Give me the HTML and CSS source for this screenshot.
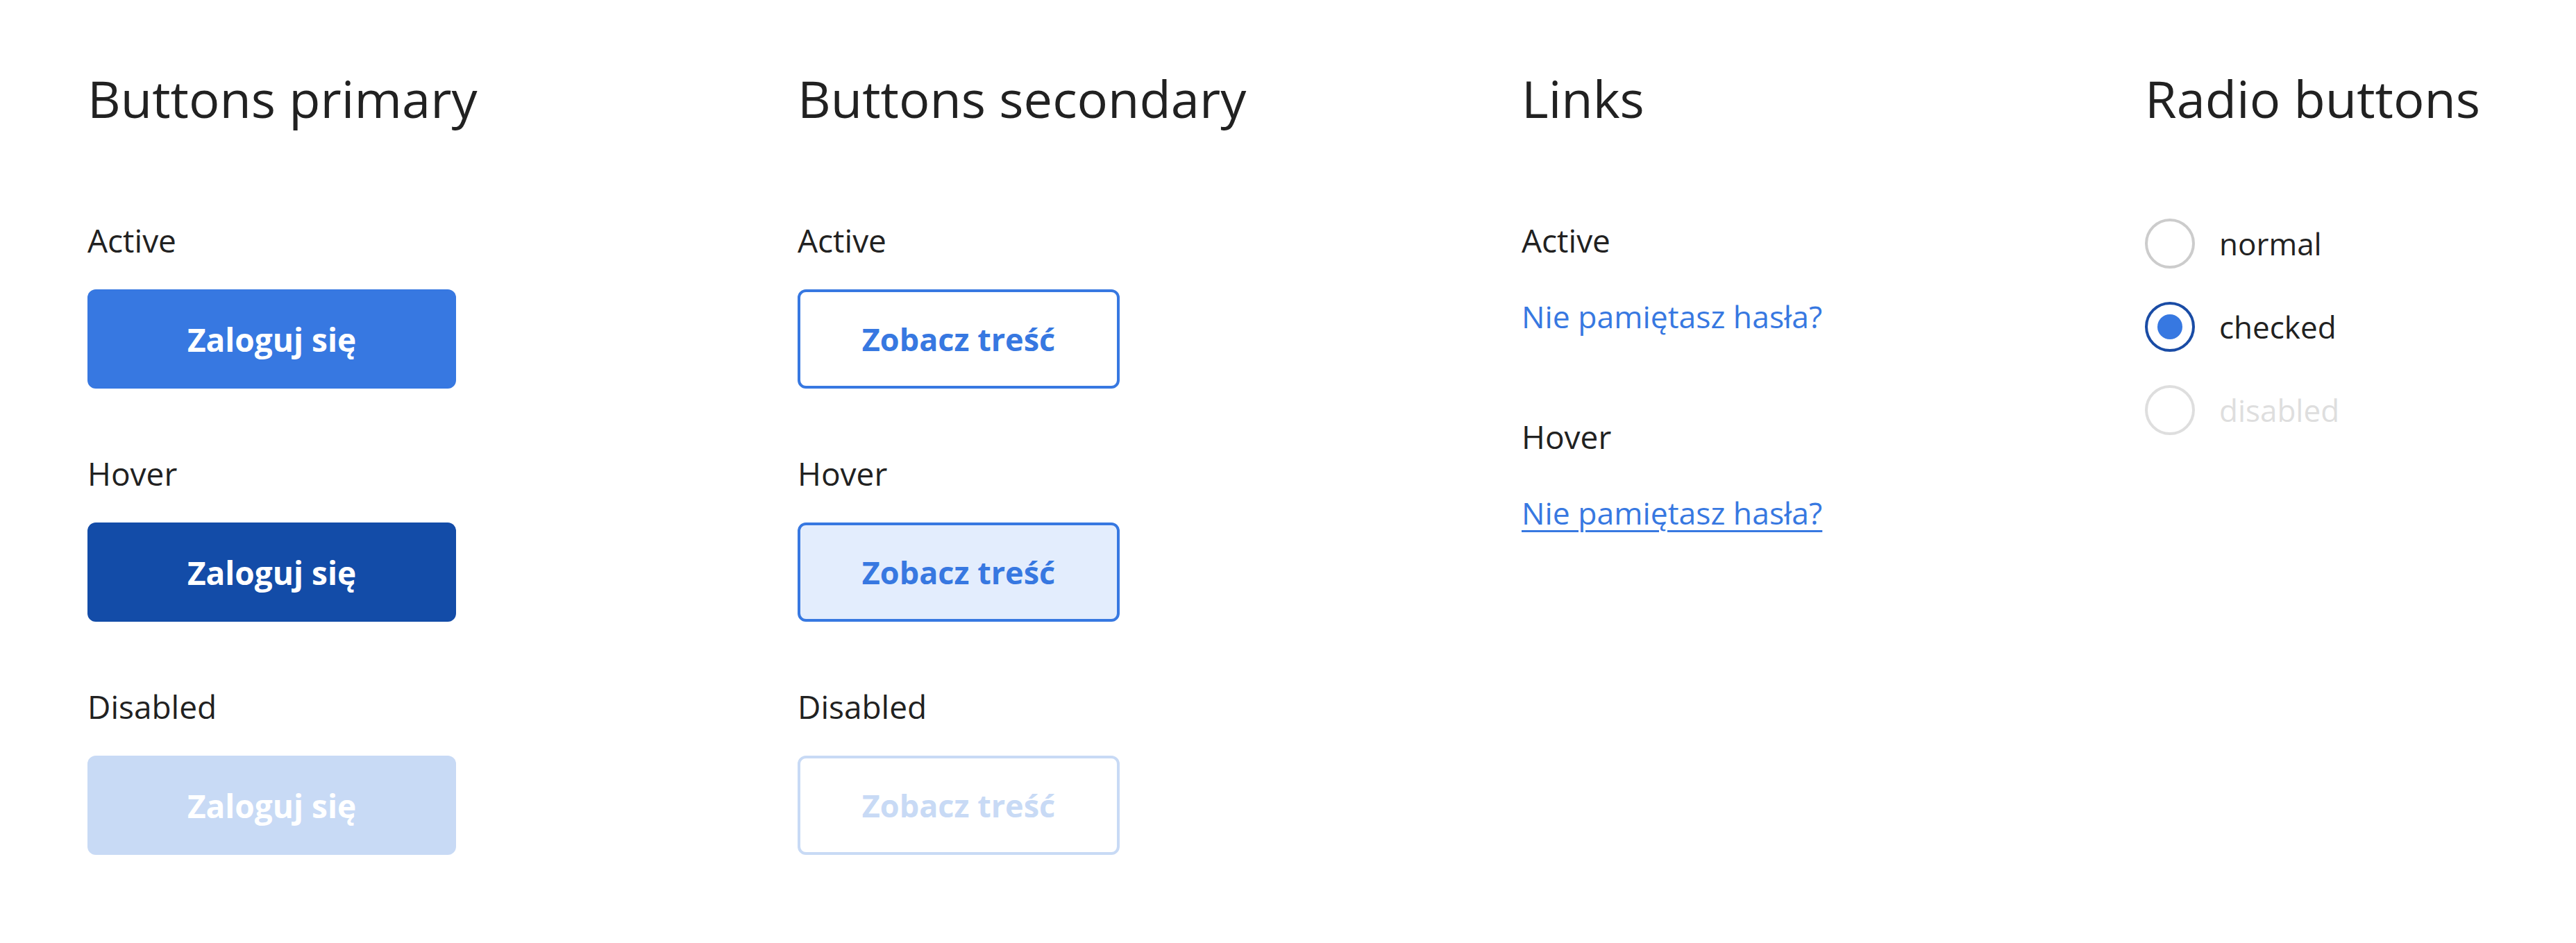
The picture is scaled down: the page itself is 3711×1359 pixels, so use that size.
FILE: index.html
```html
<!DOCTYPE html>
<html lang="pl">
<head>
<meta charset="utf-8">
<title>UI components</title>
<link rel="stylesheet" href="styles.css">
</head>
<body>
<main class="page">
  <section class="col">
    <h2 class="title">Buttons primary</h2>
    <div class="states">
      <div class="state">
        <p class="label">Active</p>
        <button class="btn btn-primary" type="button">Zaloguj się</button>
      </div>
      <div class="state">
        <p class="label">Hover</p>
        <button class="btn btn-primary is-hover" type="button">Zaloguj się</button>
      </div>
      <div class="state">
        <p class="label">Disabled</p>
        <button class="btn btn-primary" type="button" disabled>Zaloguj się</button>
      </div>
    </div>
  </section>

  <section class="col">
    <h2 class="title">Buttons secondary</h2>
    <div class="states">
      <div class="state">
        <p class="label">Active</p>
        <button class="btn btn-secondary" type="button">Zobacz treść</button>
      </div>
      <div class="state">
        <p class="label">Hover</p>
        <button class="btn btn-secondary is-hover" type="button">Zobacz treść</button>
      </div>
      <div class="state">
        <p class="label">Disabled</p>
        <button class="btn btn-secondary" type="button" disabled>Zobacz treść</button>
      </div>
    </div>
  </section>

  <section class="col">
    <h2 class="title">Links</h2>
    <div class="link-states">
      <div class="link-state">
        <p class="label">Active</p>
        <a class="link" href="#">Nie pamiętasz hasła?</a>
      </div>
      <div class="link-state">
        <p class="label">Hover</p>
        <a class="link is-hover" href="#">Nie pamiętasz hasła?</a>
      </div>
    </div>
  </section>

  <section class="col">
    <h2 class="title">Radio buttons</h2>
    <div class="radios">
      <label class="radio">
        <span class="radio-mark"></span>
        <span class="radio-text">normal</span>
      </label>
      <label class="radio radio-checked">
        <span class="radio-mark"></span>
        <span class="radio-text">checked</span>
      </label>
      <label class="radio radio-disabled">
        <span class="radio-mark"></span>
        <span class="radio-text">disabled</span>
      </label>
    </div>
  </section>
</main>
</body>
</html>
```

FILE: styles.css
```css
html, body {
  margin: 0;
  background: #ffffff;
}

body {
  font-family: "Open Sans", "Noto Sans", sans-serif;
  color: #212121;
}

.page {
  display: grid;
  grid-template-columns: 1023px 1043px 898px auto;
  padding: 97px 0 0 126px;
}

.title {
  margin: 0 0 129px;
  font-size: 74px;
  font-weight: 400;
  line-height: 90px;
}

.states {
  display: flex;
  flex-direction: column;
  gap: 92px;
}

.state {
  display: flex;
  flex-direction: column;
  align-items: flex-start;
  gap: 41px;
}

.label {
  margin: 0;
  font-size: 46px;
  line-height: 60px;
}

.btn {
  box-sizing: border-box;
  height: 143px;
  display: flex;
  align-items: center;
  justify-content: center;
  padding: 0;
  border: 0;
  border-radius: 12px;
  font-family: "Open Sans", "Noto Sans", sans-serif;
  font-size: 46px;
  font-weight: 700;
  line-height: 1;
  cursor: pointer;
}

.btn-primary {
  width: 531px;
  background: #3778e1;
  color: #ffffff;
}

.btn-primary.is-hover {
  background: #134ca8;
}

.btn-primary:disabled {
  background: #c8daf5;
  cursor: default;
}

.btn-secondary {
  width: 464px;
  background: #ffffff;
  border: 4px solid #3778e1;
  color: #3778e1;
  font-size: 45px;
}

.btn-secondary.is-hover {
  background: #e3edfd;
}

.btn-secondary:disabled {
  border-color: #c8daf5;
  color: #c8daf5;
  cursor: default;
}

.link-states {
  display: flex;
  flex-direction: column;
  gap: 113px;
}

.link-state {
  display: flex;
  flex-direction: column;
  align-items: flex-start;
  gap: 50px;
}

.link {
  font-size: 44.5px;
  line-height: 60px;
  color: #3778e1;
  text-decoration: none;
}

.link.is-hover {
  text-decoration: underline;
  text-decoration-thickness: 3px;
  text-underline-offset: 8px;
}

.radios {
  display: flex;
  flex-direction: column;
  gap: 48px;
  margin-top: -1px;
}

.radio {
  display: flex;
  align-items: center;
  gap: 35px;
  font-size: 44px;
  line-height: 60px;
}

.radio-mark {
  box-sizing: border-box;
  flex: none;
  width: 72px;
  height: 72px;
  border-radius: 50%;
  border: 4px solid #cccccc;
  display: flex;
  align-items: center;
  justify-content: center;
}

.radio-checked .radio-mark {
  border: 4px solid #1a4ca5;
}

.radio-checked .radio-mark::after {
  content: "";
  width: 36px;
  height: 36px;
  border-radius: 50%;
  background: #3778e1;
}

.radio-disabled {
  color: #dedede;
}

.radio-disabled .radio-mark {
  border-color: #dedede;
}
```
